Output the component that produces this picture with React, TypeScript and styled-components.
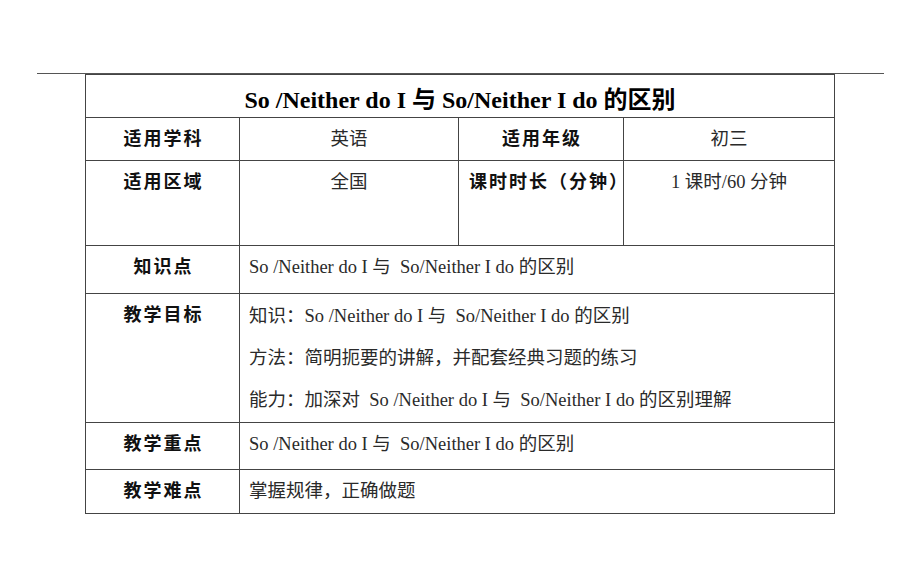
import styled, { createGlobalStyle } from "styled-components";

const GlobalStyle = createGlobalStyle`
  html, body {
    margin: 0;
    padding: 0;
    background: #ffffff;
  }
`;

const serif = `"Liberation Serif", "Noto Sans CJK SC", serif`;
const sans = `"Noto Sans CJK SC", "Noto Sans", sans-serif`;

const goals = [
  "知识：So /Neither do I 与  So/Neither I do 的区别",
  "方法：简明扼要的讲解，并配套经典习题的练习",
  "能力：加深对  So /Neither do I 与  So/Neither I do 的区别理解",
];

const App = (): JSX.Element => {
  return (
    <Page>
      <GlobalStyle />
      <Rule />
      <PlanTable>
        <colgroup>
          <col style={{ width: 154 }} />
          <col style={{ width: 219 }} />
          <col style={{ width: 165 }} />
          <col style={{ width: 211 }} />
        </colgroup>
        <tbody>
          <Row $h={43}>
            <TitleCell colSpan={4}>So /Neither do I 与 So/Neither I do 的区别</TitleCell>
          </Row>
          <Row $h={43}>
            <LabelCell>适用学科</LabelCell>
            <ValueCell $center>英语</ValueCell>
            <LabelCell>适用年级</LabelCell>
            <ValueCell $center>初三</ValueCell>
          </Row>
          <Row $h={85}>
            <LabelCell>适用区域</LabelCell>
            <ValueCell $center>全国</ValueCell>
            <LabelCell $left>课时时长（分钟）</LabelCell>
            <ValueCell $center>1 课时/60 分钟</ValueCell>
          </Row>
          <Row $h={48}>
            <LabelCell>知识点</LabelCell>
            <ValueCell colSpan={3}>So /Neither do I 与  So/Neither I do 的区别</ValueCell>
          </Row>
          <Row $h={129}>
            <LabelCell>教学目标</LabelCell>
            <ValueCell colSpan={3}>
              {goals.map((g) => (
                <GoalLine key={g}>{g}</GoalLine>
              ))}
            </ValueCell>
          </Row>
          <Row $h={47}>
            <LabelCell>教学重点</LabelCell>
            <ValueCell colSpan={3}>So /Neither do I 与  So/Neither I do 的区别</ValueCell>
          </Row>
          <Row $h={44}>
            <LabelCell>教学难点</LabelCell>
            <ValueCell colSpan={3}>掌握规律，正确做题</ValueCell>
          </Row>
        </tbody>
      </PlanTable>
    </Page>
  );
};

export default App;

const Page = styled.main`
  width: 920px;
  height: 576px;
  padding-top: 73px;
  box-sizing: border-box;
  background: #ffffff;
`;

const Rule = styled.div`
  height: 1px;
  margin: 0 36px 0 37px;
  background-color: #555555;
`;

const PlanTable = styled.table`
  margin-left: 85px;
  width: 750px;
  border-collapse: collapse;
  table-layout: fixed;
  border: 1px solid #333333;
  border-top-color: #111111;

  td {
    border: 1px solid #444444;
    padding: 0;
    vertical-align: top;
    white-space: pre;
    overflow: visible;
    box-sizing: border-box;
  }
`;

const Row = styled.tr<{ $h: number }>`
  height: ${(p) => p.$h}px;
`;

const TitleCell = styled.td`
  font-family: ${serif};
  font-weight: 700;
  font-size: 24px;
  line-height: 32px;
  padding-top: 9px !important;
  text-align: center;
  color: #000000;
`;

const LabelCell = styled.td<{ $left?: boolean }>`
  font-family: ${sans};
  font-weight: 700;
  font-size: 18px;
  letter-spacing: 2px;
  line-height: 34px;
  padding-top: 2px !important;
  text-align: ${(p) => (p.$left ? "left" : "center")};
  padding-left: ${(p) => (p.$left ? "10px" : "2px")} !important;
  color: #111111;
`;

const ValueCell = styled.td<{ $center?: boolean }>`
  font-family: ${serif};
  font-size: 18.5px;
  line-height: 34px;
  padding-top: 4px !important;
  text-align: ${(p) => (p.$center ? "center" : "left")};
  padding-left: ${(p) => (p.$center ? "0" : "9px")} !important;
  color: #2a2a2a;
`;

const GoalLine = styled.div`
  line-height: 42px;
  &:first-child {
    margin-top: -3px;
  }
`;
